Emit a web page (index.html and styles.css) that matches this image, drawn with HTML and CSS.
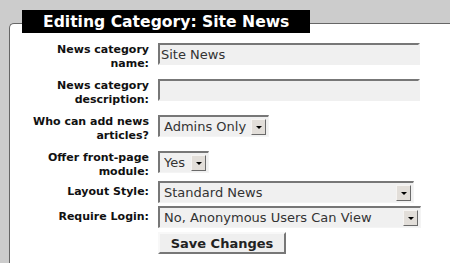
FILE: index.html
```html
<!DOCTYPE html>
<html lang="en">
<head>
  <meta charset="UTF-8">
  <title>Editing Category</title>
  <link rel="stylesheet" href="styles.css">
</head>
<body>

<div class="caption">Editing Category: Site News</div>

<div class="panel">
  <form class="edit-form">
    <div class="row">
      <label class="lbl">News category name:</label>
      <input type="text" class="txt" value="Site News">
    </div>
    <div class="row">
      <label class="lbl">News category description:</label>
      <input type="text" class="txt" value="">
    </div>
    <div class="row">
      <label class="lbl">Who can add news articles?</label>
      <div class="pick w-admins">
        <select><option>Admins Only</option><option>Everyone</option></select>
        <span class="drop"></span>
      </div>
    </div>
    <div class="row tight">
      <label class="lbl">Offer front-page module:</label>
      <div class="pick w-yes">
        <select><option>Yes</option><option>No</option></select>
        <span class="drop"></span>
      </div>
    </div>
    <div class="row single">
      <label class="lbl">Layout Style:</label>
      <div class="pick w-layout">
        <select><option>Standard News</option></select>
        <span class="drop"></span>
      </div>
    </div>
    <div class="row single last">
      <label class="lbl">Require Login:</label>
      <div class="pick w-login">
        <select><option>No, Anonymous Users Can View</option></select>
        <span class="drop"></span>
      </div>
    </div>
    <div class="row single">
      <span class="lbl"></span>
      <button type="button" class="save">Save Changes</button>
    </div>
  </form>
</div>

</body>
</html>
```

FILE: styles.css
```css
html, body {
  margin: 0;
  height: 100%;
}
body {
  background: #cccccc;
  font-family: "DejaVu Sans", Verdana, sans-serif;
  padding-top: 10px;
  box-sizing: border-box;
  overflow: hidden;
}
.caption {
  position: relative;
  z-index: 1;
  display: inline-block;
  margin-left: 22px;
  height: 23px;
  box-sizing: border-box;
  padding: 2px 21px 0 21px;
  background: #000;
  color: #fff;
  font-weight: bold;
  font-size: 15.6px;
  line-height: 21px;
  white-space: nowrap;
}
.panel {
  margin-top: -10px;
  margin-left: 9px;
  margin-right: -20px;
  height: calc(100vh - 23px);
  box-sizing: border-box;
  background: #fff;
  border-top: 1px solid #666;
  border-left: 1px solid #666;
  border-top-left-radius: 5px;
  padding: 19px 0 0 19px;
}
.row {
  display: flex;
  align-items: flex-start;
  gap: 9px;
  margin-bottom: 8px;
}
.row.tight {
  margin-bottom: 2px;
}
.row.single {
  align-items: center;
  margin-bottom: 3px;
}
.row.single.last {
  margin-bottom: 4px;
}
.lbl {
  width: 120px;
  flex: none;
  text-align: right;
  font-weight: bold;
  font-size: 11px;
  line-height: 14px;
  color: #111;
}
.txt {
  width: 262px;
  height: 22px;
  box-sizing: border-box;
  margin: 0;
  padding: 0 0 0 1px;
  background: #f0f0f0;
  border: 2px solid #777;
  border-right-color: #f0f0f0;
  border-bottom-color: #f0f0f0;
  font-family: "DejaVu Sans", Verdana, sans-serif;
  font-size: 13px;
  color: #333;
  outline: none;
}
.pick {
  display: flex;
  align-items: center;
  height: 22px;
  box-sizing: border-box;
  background: #f0f0f0;
  border: 2px solid #777;
  border-right: 1px solid #f4f4f4;
  border-bottom: 1px solid #f4f4f4;
}
.pick select {
  flex: 1;
  min-width: 0;
  -webkit-appearance: none;
  appearance: none;
  border: 0;
  margin: 0;
  padding: 0 0 0 4px;
  background: transparent;
  font-family: "DejaVu Sans", Verdana, sans-serif;
  font-size: 13px;
  color: #333;
  outline: none;
}
.drop {
  position: relative;
  flex: none;
  width: 13px;
  height: 14px;
  margin-right: 2px;
  background: #e2ded9;
  border-top: 1px solid #f6f4f2;
  border-left: 1px solid #f6f4f2;
  border-right: 1px solid #6a6a6a;
  border-bottom: 1px solid #6a6a6a;
}
.drop::after {
  content: "";
  position: absolute;
  left: 4px;
  top: 6px;
  border-left: 3px solid transparent;
  border-right: 3px solid transparent;
  border-top: 3px solid #000;
}
.w-admins { width: 111px; }
.w-yes { width: 51px; }
.w-layout { width: 256px; }
.w-login { width: 263px; }
.save {
  height: 22px;
  width: 128px;
  box-sizing: border-box;
  margin: 0;
  padding: 0;
  background: #efefef;
  border: 2px solid #f8f8f8;
  border-right-color: #777;
  border-bottom-color: #777;
  font-family: "DejaVu Sans", Verdana, sans-serif;
  font-weight: bold;
  font-size: 13px;
  color: #222;
}
```
